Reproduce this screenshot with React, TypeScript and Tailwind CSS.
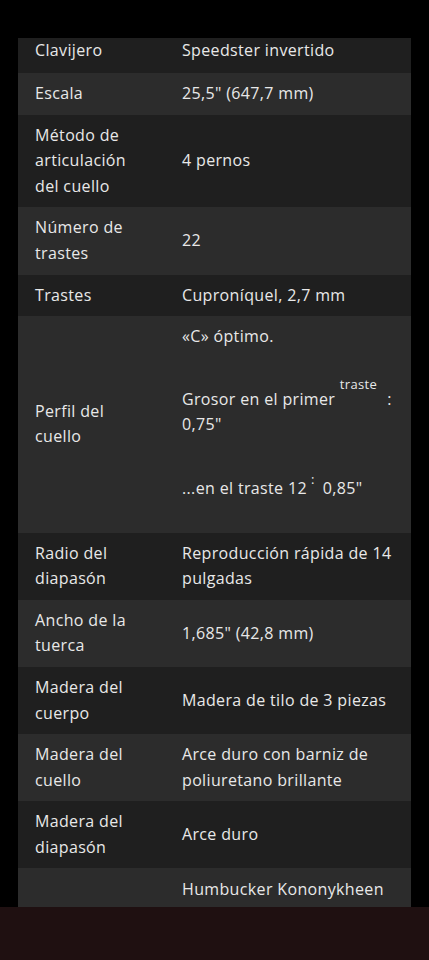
import React from 'react';

interface Spec {
  label: string;
  value: React.ReactNode;
}

const specs: Spec[] = [
  { label: 'Escala', value: '25,5" (647,7 mm)' },
  { label: 'Método de articulación del cuello', value: '4 pernos' },
  { label: 'Número de trastes', value: '22' },
  { label: 'Trastes', value: 'Cuproníquel, 2,7 mm' },
  {
    label: 'Perfil del cuello',
    value: (
      <div>
        <p className="mb-[26px]">«C» óptimo.</p>
        <p className="mb-[33px]">
          Grosor en el primer{' '}
          <span className="align-[16px] text-[13px] leading-[16px]">traste</span>
          <span className="ml-[10px]">:</span> 0,75"
        </p>
        <p className="mb-[23px]">
          ...en el traste 12
          <span className="ml-[4px] align-[10px] text-[13px] leading-[16px]">:</span>
          <span className="ml-[8px]">0,85"</span>
        </p>
      </div>
    ),
  },
  { label: 'Radio del diapasón', value: 'Reproducción rápida de 14 pulgadas' },
  { label: 'Ancho de la tuerca', value: '1,685" (42,8 mm)' },
  { label: 'Madera del cuerpo', value: 'Madera de tilo de 3 piezas' },
  { label: 'Madera del cuello', value: 'Arce duro con barniz de poliuretano brillante' },
  { label: 'Madera del diapasón', value: 'Arce duro' },
];

const SpecRow: React.FC<{ spec: Spec; index: number }> = ({ spec, index }) => (
  <div
    className={`grid grid-cols-[164px_1fr] py-2 ${index % 2 === 0 ? 'bg-[#2c2c2c]' : 'bg-[#1f1f1f]'}`}
  >
    <div className="flex items-center pl-[17px] pr-[36px]">{spec.label}</div>
    <div className="flex items-center pr-[14px]">{spec.value}</div>
  </div>
);

export default function App() {
  return (
    <div
      className="flex min-h-[960px] w-full flex-col bg-black text-[16px] leading-[25.6px] tracking-[0.35px] text-[#e8e8e8]"
      style={{ fontFamily: '"Open Sans", "Noto Sans", sans-serif' }}
    >
      <div className="h-[38px]" />
      <div className="mx-[18px] flex flex-col">
        <div className="grid h-[35px] grid-cols-[164px_1fr] bg-[#1f1f1f]">
          <div className="pl-[17px] pt-0">Clavijero</div>
          <div>Speedster invertido</div>
        </div>
        {specs.map((s, i) => (
          <SpecRow key={s.label} spec={s} index={i} />
        ))}
        <div className="grid h-[39px] grid-cols-[164px_1fr] overflow-hidden bg-[#2c2c2c] pt-[9px]">
          <div className="pl-[17px]" />
          <div>Humbucker Kononykheen</div>
        </div>
      </div>
      <div className="flex-1 bg-[#1f1011]" />
    </div>
  );
}
